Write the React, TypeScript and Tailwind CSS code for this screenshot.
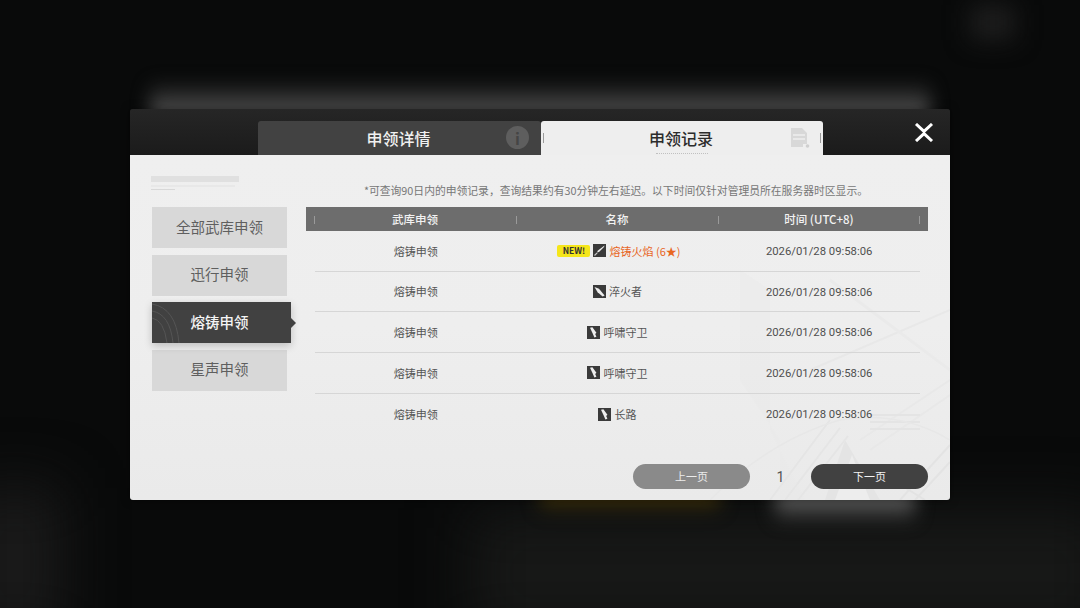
const rows = [
  { pool: '熔铸申领', name: '熔铸火焰 (6★)', icon: 'sword', isNew: true },
  { pool: '熔铸申领', name: '淬火者', icon: 'blade' },
  { pool: '熔铸申领', name: '呼啸守卫', icon: 'gun' },
  { pool: '熔铸申领', name: '呼啸守卫', icon: 'gun' },
  { pool: '熔铸申领', name: '长路', icon: 'gun' },
];

const navItems = ['全部武库申领', '迅行申领', '熔铸申领', '星声申领'];
const columns = ['武库申领', '名称', '时间 (UTC+8)'];

function WeaponIcon({ kind }: { kind: string }) {
  return (
    <svg width="13" height="13" viewBox="0 0 13 13" className="shrink-0">
      <rect width="13" height="13" fill="#3a3a3a" />
      {kind === 'sword' && (
        <>
          <path d="M11.5 1.5 L5 6.5 L3.8 8.6 L6 8 L11 3 Z" fill="#eeeeee" />
          <path d="M1.5 11.5 L4.2 8.8" stroke="#cccccc" strokeWidth="1.2" />
        </>
      )}
      {kind === 'blade' && <path d="M1.5 2 L6 3.8 L11.6 10.6 L9.6 11.4 L4.6 7.2 Z" fill="#eeeeee" />}
      {kind === 'gun' && (
        <path d="M3 1.8 L5.4 1.2 L9.4 6.8 L8.2 8 L9.4 10.8 L7.4 11.6 L5.8 7.8 Z" fill="#eeeeee" />
      )}
    </svg>
  );
}

function Tick({ hidden, dark }: { hidden?: boolean; dark?: boolean }) {
  return (
    <span className={`h-[8px] w-px shrink-0 ${dark ? 'bg-[#9a9a9a]' : 'bg-[#b5b5b5]'} ${hidden ? 'invisible' : ''}`} />
  );
}

function PanelArt() {
  return (
    <svg
      width="240"
      height="250"
      viewBox="0 0 240 250"
      fill="none"
      className="pointer-events-none absolute bottom-0 right-0 blur-[0.7px]"
    >
      <path d="M30 20 L30 130 L70 190 L70 250 L95 250 L60 180 L60 40 Z" fill="#e9e9e9" opacity="0.45" />
      <path d="M115 250 L135 190 L170 250 Z" fill="#e4e4e4" />
      <path d="M125 250 L142 205 L160 250 Z" fill="#ededed" />
      <path d="M60 250 L120 170 M75 250 L130 178 M88 250 L138 186" stroke="#e5e5e5" strokeWidth="2" />
      <path d="M150 190 L240 130 M160 200 L240 145 M100 120 L240 60" stroke="#e8e8e8" strokeWidth="2" />
      <path d="M160 165 L210 165 M160 172 L210 172 M160 179 L210 179" stroke="#e4e4e4" strokeWidth="2" />
      <path d="M190 250 L240 195 M205 250 L240 212 M175 225 L215 250" stroke="#e3e3e3" strokeWidth="2" />
      <path d="M120 30 L240 120" stroke="#eaeaea" strokeWidth="3" />
      <path d="M0 250 Q60 190 130 170 Q190 160 240 190" stroke="#e7e7e7" strokeWidth="1.5" />
    </svg>
  );
}

export default function App() {
  return (
    <div
      className="relative h-[608px] w-[1080px] overflow-hidden bg-[#090a0a] pl-[130px] pt-[109px]"
      style={{ fontFamily: '"Noto Sans CJK SC", "Noto Sans", sans-serif' }}
    >
      {/* blurred game scene behind the dialog */}
      <div className="absolute bottom-[-30px] right-[-30px] h-[130px] w-[640px] bg-[#171817] blur-[30px]" />
      <div className="absolute bottom-[-30px] left-[-30px] h-[150px] w-[90px] bg-[#1b1b1b] blur-[30px]" />
      <div className="absolute left-[150px] top-[80px] h-[60px] w-[780px] bg-gradient-to-b from-transparent via-[#4a4a4a] to-[#8a8a8a] blur-[9px]" />
      <div className="absolute left-[540px] top-[480px] h-[34px] w-[180px] bg-gradient-to-b from-[#55420c] via-[#3d300a] to-transparent blur-[9px]" />
      <div className="absolute left-[775px] top-[480px] h-[44px] w-[140px] bg-gradient-to-b from-[#757575] via-[#555555] to-transparent blur-[9px]" />
      <div className="absolute left-[970px] top-[5px] h-[35px] w-[45px] bg-[#1d1d1d] blur-[12px]" />

      <div className="relative flex h-[391px] w-[820px] flex-col overflow-hidden rounded-[3px] shadow-[0_0_8px_rgba(0,0,0,0.5)]">
        <div className="flex h-[46px] shrink-0 items-end bg-[#1f1f1f] bg-gradient-to-b from-[#262626] to-[#1b1b1b] pl-[128px]">
          <div className="relative flex h-[34px] w-[283px] items-center justify-center rounded-t-[3px] bg-[#424242] pr-[2px]">
            <span className="text-[16px] font-medium text-[#f0f0f0]">申领详情</span>
            <span className="absolute right-[12px] top-[5px] flex h-[23px] w-[23px] items-center justify-center rounded-full bg-[#5e5e5e] text-[16px] font-bold text-[#454545]">
              i
            </span>
          </div>
          <div className="relative flex h-[34px] w-[282px] items-center justify-center rounded-t-[3px] bg-[#eeeeee] pr-[2px]">
            <span className="absolute left-[2px] top-[12px] h-[10px] w-px bg-[#9a9a9a]" />
            <span className="text-[16px] font-medium text-[#2c2c2c]">申领记录</span>
            <span className="absolute left-[115px] top-[32px] w-[52px] border-t border-dotted border-[#c0c0c0]" />
            <svg width="20" height="22" viewBox="0 0 20 22" className="absolute right-[13px] top-[6px]">
              <path d="M1 1 H12 L17 6 V17 H13 V20 H1 Z" fill="#d8d8d8" />
              <path d="M3 8 H15 M3 12 H15" stroke="#eeeeee" strokeWidth="1.6" />
              <circle cx="17.5" cy="19" r="1.8" fill="#cfcfcf" />
            </svg>
            <span className="absolute right-[2px] top-[12px] h-[10px] w-px bg-[#9a9a9a]" />
          </div>
          <div className="ml-auto mr-[16px] flex h-full items-center pt-px">
            <svg width="20" height="19" viewBox="0 0 20 19" fill="none">
              <path d="M2 1 L10 8.4 L18 1 M2 18 L10 10.6 L18 18" stroke="#ffffff" strokeWidth="3" />
            </svg>
          </div>
        </div>

        <div className="relative flex min-h-0 flex-1 bg-gradient-to-b from-[#efefef] via-[#eeeeee] to-[#eaeaea] pl-[22px]">
          <PanelArt />

          <aside className="relative w-[135px] shrink-0 pt-[21px]">
            <div className="-ml-px h-[6px] w-[88px] bg-[#e0e0e0]" />
            <div className="-ml-px mt-[3px] h-[2px] w-[84px] bg-[#e8e8e8]" />
            <div className="-ml-px mt-[2px] h-px w-[24px] bg-[#d8d8d8]" />
            <nav className="mt-[17px] flex flex-col gap-[6.5px]">
              {navItems.map((label) =>
                label === '熔铸申领' ? (
                  <div
                    key={label}
                    className="relative flex h-[41px] w-[139px] items-center justify-center overflow-visible bg-[#414141] pb-[2px] text-[14.5px] font-medium text-[#f4f4f4] shadow-[0_3px_8px_rgba(0,0,0,0.2)]"
                  >
                    <svg width="40" height="41" viewBox="0 0 40 41" fill="none" className="absolute left-0 top-0">
                      <path d="M0 2 Q24 6 27 41 M0 9 Q18 12 21 41 M0 16 Q12 18 15 41" stroke="#555555" strokeWidth="1" />
                    </svg>
                    <span className="relative pr-[4px]">{label}</span>
                    <span className="absolute -right-[5px] top-[16px] h-0 w-0 border-y-[5px] border-l-[5px] border-y-transparent border-l-[#414141]" />
                  </div>
                ) : (
                  <div
                    key={label}
                    className="flex h-[41px] items-center justify-center bg-[#d8d8d8] pb-[2px] text-[14.5px] text-[#5f5f5f]"
                  >
                    {label}
                  </div>
                ),
              )}
            </nav>
          </aside>

          <main className="relative ml-[19px] flex w-[622px] flex-col">
            <p className="flex h-[52px] shrink-0 items-center justify-end whitespace-nowrap pr-[60px] pt-[18px] text-[10.8px] text-[#777777]">
              *可查询90日内的申领记录，查询结果约有30分钟左右延迟。以下时间仅针对管理员所在服务器时区显示。
            </p>

            <div className="grid h-[24px] shrink-0 grid-cols-3 items-center bg-[#6d6d6d] px-[8px] pt-px text-[11.5px] font-medium text-[#f2f2f2]">
              {columns.map((col, i) => (
                <div key={col} className="flex items-center">
                  <Tick dark />
                  <span className="flex-1 text-center">{col}</span>
                  <Tick dark hidden={i !== 2} />
                </div>
              ))}
            </div>

            <div className="pl-[9px] pr-[8px]">
              {rows.map((row, i) => (
                <div
                  key={i}
                  className={`grid h-[40.7px] grid-cols-3 items-center text-[11px] text-[#555555] ${
                    i < rows.length - 1 ? 'border-b border-[#d6d6d6]' : ''
                  }`}
                >
                  <span className="text-center">{row.pool}</span>
                  <span className="flex items-center justify-center">
                    {row.isNew && (
                      <span className="ml-[3px] mr-[3px] flex h-[12px] w-[33px] items-center justify-center rounded-[2px] bg-[#f5e61a] text-[8.5px] font-bold text-[#333333]">
                        NEW!
                      </span>
                    )}
                    <WeaponIcon kind={row.icon} />
                    <span className={`ml-[3px] ${row.isNew ? 'text-[#e8661f]' : ''}`}>{row.name}</span>
                  </span>
                  <span
                    className="pt-[3px] text-center text-[11.3px] text-[#4f4f4f]"
                    style={{ fontFamily: 'Roboto, sans-serif' }}
                  >
                    2026/01/28 09:58:06
                  </span>
                </div>
              ))}
            </div>

            <div className="mb-[11px] mt-auto flex items-center">
              <button
                type="button"
                className="ml-[327px] h-[25px] w-[117px] rounded-full bg-[#8a8a8a] text-[11px] text-[#ececec]"
              >
                上一页
              </button>
              <span
                className="w-[61px] pt-px text-center text-[14px] text-[#555555]"
                style={{ fontFamily: 'Roboto, sans-serif' }}
              >
                1
              </span>
              <button
                type="button"
                className="h-[25px] w-[117px] rounded-full bg-[#414141] text-[11px] text-[#f2f2f2]"
              >
                下一页
              </button>
            </div>
          </main>
        </div>
      </div>
    </div>
  );
}
